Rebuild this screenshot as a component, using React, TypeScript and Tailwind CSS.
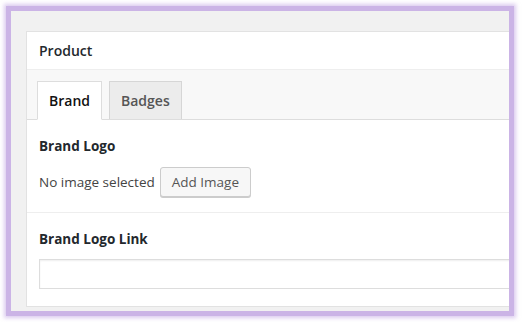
import React from "react";

export default function App() {
  const font = { fontFamily: '"Open Sans", "Noto Sans", sans-serif' };
  return (
    <div className="w-[522px] h-[322px] bg-white pt-[6px] pl-[6px]" style={font}>
      <div className="w-[508px] h-[310px] border-[5px] border-[#cbb4e6] shadow-[0_0_4px_2px_rgba(190,160,225,0.55)] bg-[#f1f1f1] overflow-hidden pt-[20px] pl-[15px]">
        <div className="w-[520px] h-[276px] bg-white border border-[#e2e2e2] flex flex-col text-[#23282d]">
          <div className="h-[38px] border-b border-[#eeeeee] flex items-center pl-[12px] text-[14px] font-semibold">
            Product
          </div>
          <div className="h-[50px] bg-[#f8f8f8] border-b border-[#dddddd] flex items-end pl-[10px] gap-[7px]">
            <div className="h-[39px] -mb-px bg-white border border-[#dddddd] border-b-white px-[11px] flex items-center text-[14px] font-semibold text-[#111]">
              Brand
            </div>
            <div className="h-[38px] bg-[#ececec] border border-b-0 border-[#d6d6d6] px-[11px] flex items-center text-[14px] font-semibold text-[#555]">
              Badges
            </div>
          </div>
          <div className="h-[93px] border-b border-[#eeeeee] pl-[12px] pt-[16px] flex flex-col">
            <div className="text-[13.5px] font-bold leading-[20px]">Brand Logo</div>
            <div className="flex items-center gap-[5px] mt-[11px]">
              <span className="text-[13.5px] text-[#444]">No image selected</span>
              <button className="h-[30px] px-[11px] text-[13.5px] text-[#555] bg-[#f7f7f7] border border-[#cccccc] rounded-[3px] shadow-[0_1px_0_#cccccc]">
                Add Image
              </button>
            </div>
          </div>
          <div className="flex-1 pl-[12px] pt-[16px] flex flex-col">
            <div className="text-[13.5px] font-bold leading-[20px]">Brand Logo Link</div>
            <div className="mt-[10px] h-[30px] border border-[#dddddd] shadow-[inset_0_1px_2px_rgba(0,0,0,0.07)] bg-white w-[520px]" />
          </div>
        </div>
      </div>
    </div>
  );
}
